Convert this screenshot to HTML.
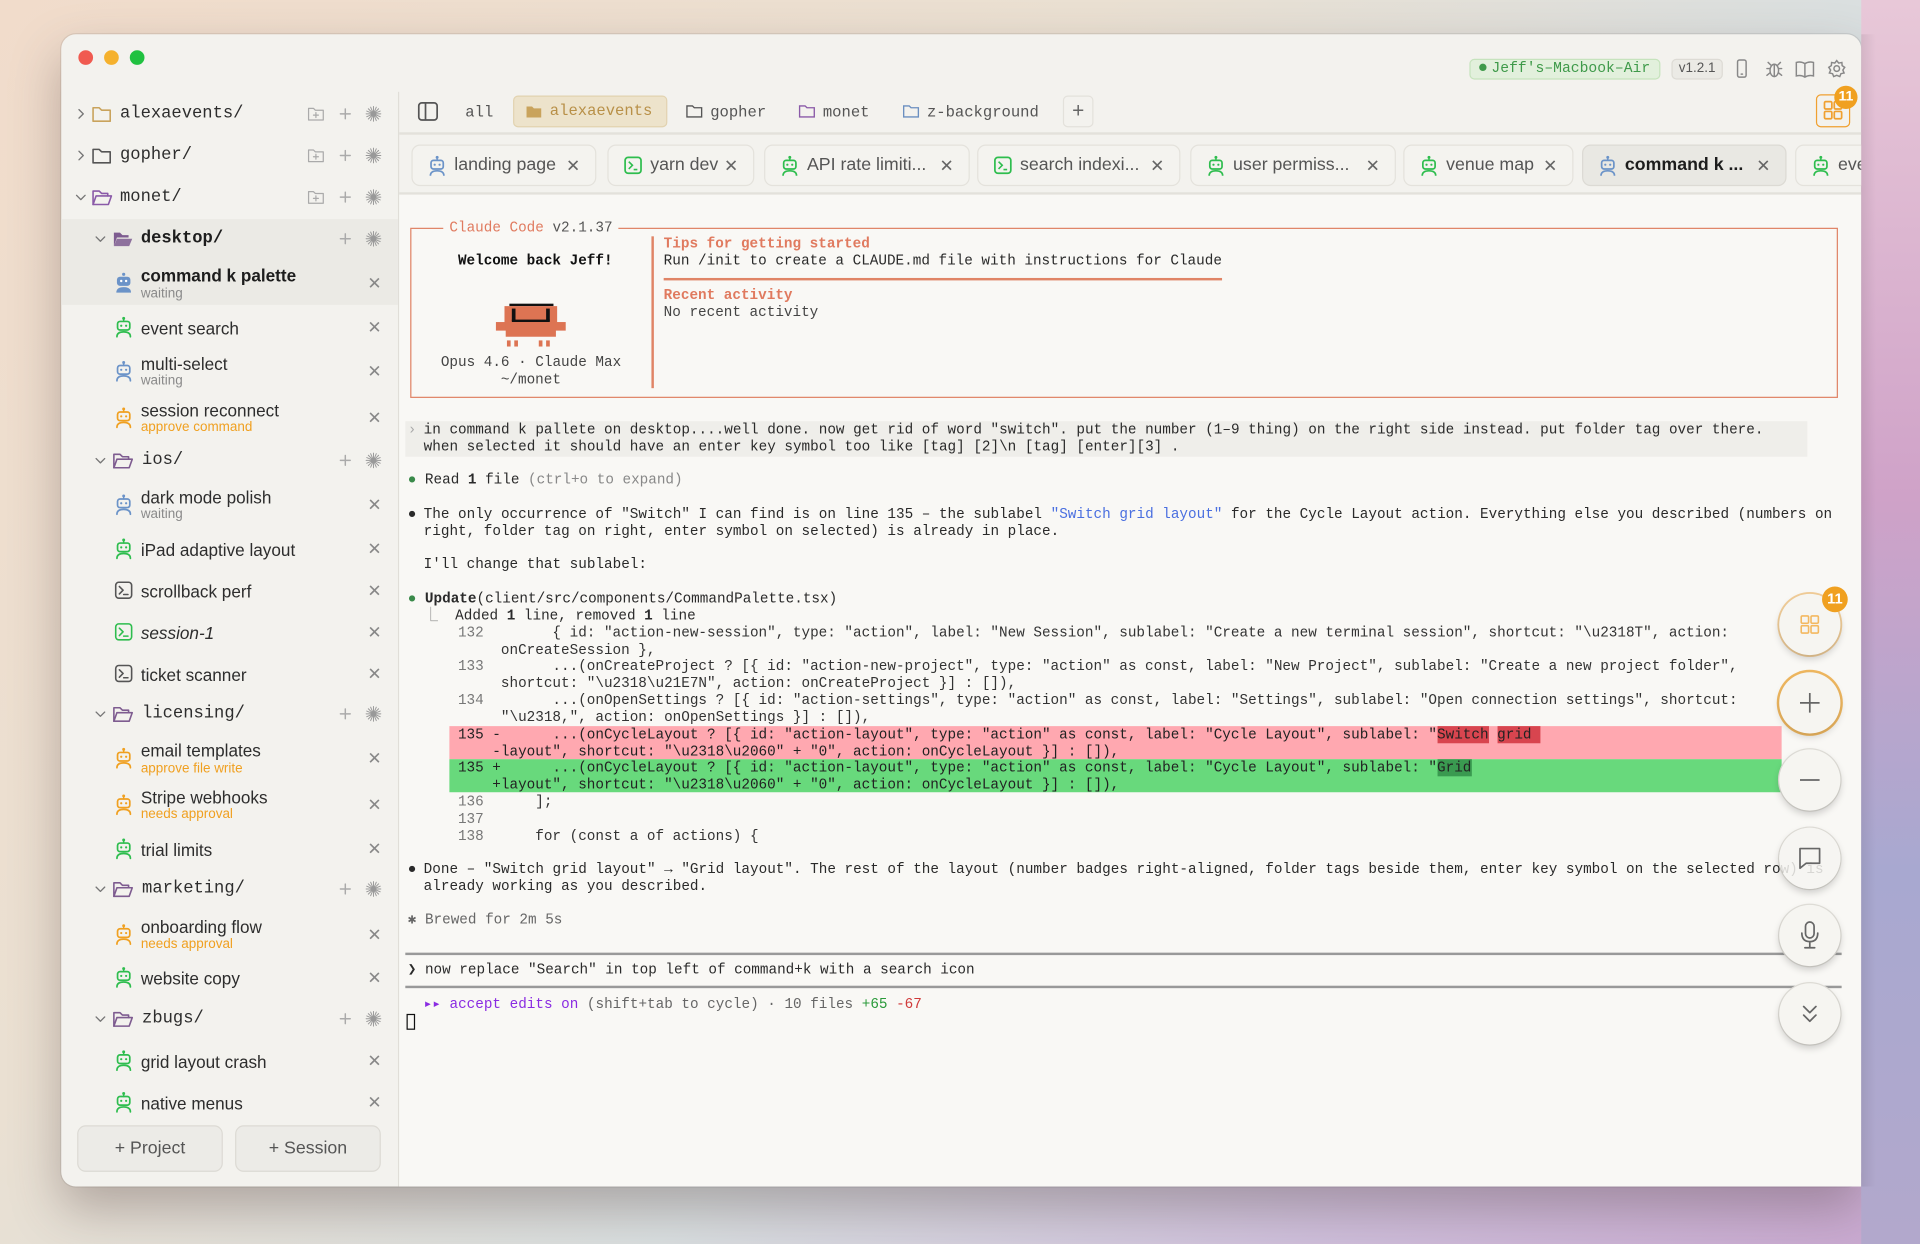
<!DOCTYPE html>
<html><head><meta charset="utf-8">
<style>
*{box-sizing:border-box;margin:0;padding:0}
html,body{width:1920px;height:1244px;overflow:hidden}
body{background:linear-gradient(135deg,#f1dccb 0%,#eae0d2 35%,#d9dfe0 60%,#cfc0dc 80%,#c9a8d0 100%);position:relative;font-family:"Liberation Sans",sans-serif}
#w{position:absolute;left:0;top:0;width:1568px;height:1016px;transform:scale(1.224490);transform-origin:0 0}
.a{position:absolute;white-space:nowrap}
.win{position:absolute;left:50px;top:28px;width:1470px;height:941px;background:#f3f2ee;border-radius:12px;box-shadow:0 18px 40px rgba(80,60,60,.35),0 0 0 1px rgba(0,0,0,.08);overflow:hidden}
.mono{font-family:"Liberation Mono",monospace}
.t{font-family:"Liberation Mono",monospace;font-size:11.7px;color:#2a2a2a;line-height:14px;white-space:pre}
.si{font-size:14px;color:#2d2d2d}
.sub{font-size:11px;color:#8a8a8a}
.x{color:#888;font-size:14px}
.tab{position:absolute;top:118px;height:34px;border:1px solid #e4e2dc;border-radius:7px;background:#f4f3ef;font-size:14.5px;color:#555;padding-left:12px;display:flex;align-items:center}
.tab svg{margin-right:6px}
.tab .c{position:absolute;right:12px;top:8px;color:#666;font-size:14px}
.fb{position:absolute;left:1453px;width:50px;height:50px;border-radius:50%;background:#f6f5f1;box-shadow:0 3px 6px rgba(0,0,0,.18),0 0 0 1px #e2e0da;display:flex;align-items:center;justify-content:center}
.fm{font-family:"Liberation Mono",monospace;font-size:12.7px;color:#555}
</style></head><body>
<div id="w">
<div class="win"></div>
<div class="a" style="left:64px;top:41px;width:12px;height:12px;border-radius:50%;background:#f05a50"></div>
<div class="a" style="left:85px;top:41px;width:12px;height:12px;border-radius:50%;background:#f5b12d"></div>
<div class="a" style="left:106px;top:41px;width:12px;height:12px;border-radius:50%;background:#20c140"></div>

<div class="a" style="left:325px;top:75px;width:1px;height:894px;background:#e0ded8"></div>
<div class="a" style="left:50px;top:179px;width:275px;height:70px;background:#ebeae5"></div>

<svg class="a" style="left:60px;top:80px" width="270" height="840" viewBox="60 80 270 840" fill="none" stroke-linecap="round" stroke-linejoin="round">
<defs>
<g id="rb"><circle cx="0" cy="-7" r="1.2" fill="currentColor"/><path d="M0 -6V-4.5" stroke="currentColor" stroke-width="1.2"/><rect x="-5" y="-4.5" width="10" height="7" rx="2" stroke="currentColor" stroke-width="1.4"/><circle cx="-2" cy="-1" r="0.9" fill="currentColor"/><circle cx="2" cy="-1" r="0.9" fill="currentColor"/><path d="M-5.5 8Q-5.5 4 0 4Q5.5 4 5.5 8" stroke="currentColor" stroke-width="1.4"/></g>
<g id="rbf"><circle cx="0" cy="-7" r="1.3" fill="currentColor"/><rect x="-5.5" y="-5" width="11" height="7.5" rx="2.5" fill="currentColor"/><circle cx="-2" cy="-1.5" r="1" fill="#fff"/><circle cx="2" cy="-1.5" r="1" fill="#fff"/><path d="M-6 8Q-6 3.5 0 3.5Q6 3.5 6 8Z" fill="currentColor"/></g>
<g id="tm"><rect x="-6.5" y="-6.5" width="13" height="13" rx="2.5" stroke="currentColor" stroke-width="1.3"/><path d="M-3.5 -3L-0.5 0L-3.5 3M0 3.5H3.5" stroke="currentColor" stroke-width="1.3"/></g>
<g id="fo"><path d="M-7 -5H-2L0 -3H7V6H-7Z" stroke="currentColor" stroke-width="1.3"/></g>
<g id="fop"><path d="M-7 6V-5H-2L0 -3H5V-1" stroke="currentColor" stroke-width="1.3"/><path d="M-7 6L-4.5 -1H8L5.5 6Z" stroke="currentColor" stroke-width="1.3"/></g>
<g id="fof"><path d="M-7 6V-5H-2L0 -3H5V-1H-4.5L-7 6Z" fill="currentColor"/><path d="M-7 6L-4.5 0H8L5.5 6Z" fill="currentColor" opacity=".85"/></g>
<g id="fp"><path d="M-6 -4.5H-2L-0.5 -3H6V5H-6Z" stroke="#aaa" stroke-width="1"/><path d="M0 -1V3M-2 1H2" stroke="#aaa" stroke-width="1"/></g>
<g id="pl"><path d="M-4 0H4M0 -4V4" stroke="#aaa" stroke-width="1.2"/></g>
<g id="sp"><path d="M0 -6V6M-6 0H6M-4.2 -4.2L4.2 4.2M-4.2 4.2L4.2 -4.2M-2.3 -5.5L2.3 5.5M-5.5 -2.3L5.5 2.3M-2.3 5.5L2.3 -5.5M-5.5 2.3L5.5 -2.3" stroke="#999" stroke-width="0.8"/></g>
<g id="cv"><path d="M-1.5 -3.5L2 0L-1.5 3.5" stroke="#777" stroke-width="1.1"/></g>
<g id="cd"><path d="M-3.5 -1.5L0 2L3.5 -1.5" stroke="#777" stroke-width="1.1"/></g>
</defs>
<use href="#cv" x="66" y="93"/><use href="#fo" x="83" y="93" style="color:#c9a35c"/>
<use href="#cv" x="66" y="127"/><use href="#fo" x="83" y="127" style="color:#555"/>
<use href="#cd" x="66" y="161"/><use href="#fop" x="83" y="161" style="color:#8a5aa8"/>
<g><use href="#fp" x="258" y="93"/><use href="#pl" x="282" y="93"/><use href="#sp" x="305" y="93"/>
<use href="#fp" x="258" y="127"/><use href="#pl" x="282" y="127"/><use href="#sp" x="305" y="127"/>
<use href="#fp" x="258" y="161"/><use href="#pl" x="282" y="161"/><use href="#sp" x="305" y="161"/></g>
<use href="#cd" x="82" y="195"/><use href="#fof" x="100" y="195" style="color:#7e5c90"/><use href="#pl" x="282" y="195"/><use href="#sp" x="305" y="195"/>
<use href="#rbf" x="101" y="231" style="color:#6b93c8"/>
<use href="#rb" x="101" y="267" style="color:#2ebd4e"/>
<use href="#rb" x="101" y="303" style="color:#6b93c8"/>
<use href="#rb" x="101" y="341" style="color:#f0a020"/>
<use href="#cd" x="82" y="376"/><use href="#fop" x="100" y="376" style="color:#7e5c90"/><use href="#pl" x="282" y="376"/><use href="#sp" x="305" y="376"/>
<use href="#rb" x="101" y="412" style="color:#6b93c8"/>
<use href="#rb" x="101" y="448" style="color:#2ebd4e"/>
<use href="#tm" x="101" y="482" style="color:#555"/>
<use href="#tm" x="101" y="516" style="color:#2ebd4e"/>
<use href="#tm" x="101" y="550" style="color:#555"/>
<use href="#cd" x="82" y="583"/><use href="#fop" x="100" y="583" style="color:#7e5c90"/><use href="#pl" x="282" y="583"/><use href="#sp" x="305" y="583"/>
<use href="#rb" x="101" y="619" style="color:#f0a020"/>
<use href="#rb" x="101" y="657" style="color:#f0a020"/>
<use href="#rb" x="101" y="693" style="color:#2ebd4e"/>
<use href="#cd" x="82" y="726"/><use href="#fop" x="100" y="726" style="color:#7e5c90"/><use href="#pl" x="282" y="726"/><use href="#sp" x="305" y="726"/>
<use href="#rb" x="101" y="763" style="color:#f0a020"/>
<use href="#rb" x="101" y="798" style="color:#2ebd4e"/>
<use href="#cd" x="82" y="832"/><use href="#fop" x="100" y="832" style="color:#7e5c90"/><use href="#pl" x="282" y="832"/><use href="#sp" x="305" y="832"/>
<use href="#rb" x="101" y="866" style="color:#2ebd4e"/>
<use href="#rb" x="101" y="900" style="color:#2ebd4e"/>
</svg>

<div class="a mono" style="left:98px;top:85px;font-size:14px;color:#2d2d2d">alexaevents/</div>
<div class="a mono" style="left:98px;top:119px;font-size:14px;color:#2d2d2d">gopher/</div>
<div class="a mono" style="left:98px;top:153px;font-size:14px;color:#2d2d2d">monet/</div>
<div class="a mono" style="left:115px;top:187px;font-size:14px;color:#1d1d1d;font-weight:bold">desktop/</div>
<div class="a si" style="left:115px;top:217px;font-weight:bold;color:#1d1d1d">command k palette</div><div class="a sub" style="left:115px;top:234px">waiting</div>
<div class="a si" style="left:115px;top:260px">event search</div>
<div class="a si" style="left:115px;top:289px">multi-select</div><div class="a sub" style="left:115px;top:305px">waiting</div>
<div class="a si" style="left:115px;top:327px">session reconnect</div><div class="a sub" style="left:115px;top:343px;color:#f0a020">approve command</div>
<div class="a mono" style="left:116px;top:368px;font-size:14px;color:#2d2d2d">ios/</div>
<div class="a si" style="left:115px;top:398px">dark mode polish</div><div class="a sub" style="left:115px;top:414px">waiting</div>
<div class="a si" style="left:115px;top:441px">iPad adaptive layout</div>
<div class="a si" style="left:115px;top:475px">scrollback perf</div>
<div class="a si" style="left:115px;top:509px;font-style:italic">session-1</div>
<div class="a si" style="left:115px;top:543px">ticket scanner</div>
<div class="a mono" style="left:116px;top:575px;font-size:14px;color:#2d2d2d">licensing/</div>
<div class="a si" style="left:115px;top:605px">email templates</div><div class="a sub" style="left:115px;top:622px;color:#f0a020">approve file write</div>
<div class="a si" style="left:115px;top:643px">Stripe webhooks</div><div class="a sub" style="left:115px;top:659px;color:#f0a020">needs approval</div>
<div class="a si" style="left:115px;top:686px">trial limits</div>
<div class="a mono" style="left:116px;top:718px;font-size:14px;color:#2d2d2d">marketing/</div>
<div class="a si" style="left:115px;top:749px">onboarding flow</div><div class="a sub" style="left:115px;top:765px;color:#f0a020">needs approval</div>
<div class="a si" style="left:115px;top:791px">website copy</div>
<div class="a mono" style="left:116px;top:824px;font-size:14px;color:#2d2d2d">zbugs/</div>
<div class="a si" style="left:115px;top:859px">grid layout crash</div>
<div class="a si" style="left:115px;top:893px">native menus</div>
<div class="a x" style="left:300px;top:223px">✕</div><div class="a x" style="left:300px;top:259px">✕</div><div class="a x" style="left:300px;top:295px">✕</div><div class="a x" style="left:300px;top:333px">✕</div><div class="a x" style="left:300px;top:404px">✕</div><div class="a x" style="left:300px;top:440px">✕</div><div class="a x" style="left:300px;top:474px">✕</div><div class="a x" style="left:300px;top:508px">✕</div><div class="a x" style="left:300px;top:542px">✕</div><div class="a x" style="left:300px;top:611px">✕</div><div class="a x" style="left:300px;top:649px">✕</div><div class="a x" style="left:300px;top:685px">✕</div><div class="a x" style="left:300px;top:755px">✕</div><div class="a x" style="left:300px;top:790px">✕</div><div class="a x" style="left:300px;top:858px">✕</div><div class="a x" style="left:300px;top:892px">✕</div>
<div class="a" style="left:63px;top:919px;width:119px;height:38px;border:1px solid #dcdad4;border-radius:7px;background:#ecebe7;font-size:14.5px;color:#555;text-align:center;line-height:36px">+ Project</div>
<div class="a" style="left:192px;top:919px;width:119px;height:38px;border:1px solid #dcdad4;border-radius:7px;background:#ecebe7;font-size:14.5px;color:#555;text-align:center;line-height:36px">+ Session</div>

<div class="a mono" style="left:1200px;top:48px;width:156px;height:17px;border:1px solid #c6e3bd;background:#e2f0dc;border-radius:4px;font-size:12px;color:#3f9a4a;line-height:15px;padding-left:7px"><span style="display:inline-block;width:6px;height:6px;border-radius:50%;background:#3f9a4a;margin-right:4px;vertical-align:1px"></span>Jeff's–Macbook–Air</div>
<div class="a" style="left:1365px;top:48px;width:42px;height:17px;border:1px solid #dddbd5;background:#ebeae5;border-radius:4px;font-size:11px;color:#555;line-height:15px;text-align:center">v1.2.1</div>
<svg class="a" style="left:1414px;top:47px" width="100" height="20" fill="none" stroke="#888" stroke-width="1.2" stroke-linecap="round">
<rect x="5" y="2" width="7" height="14" rx="1.5"/><path d="M8 13.5h1"/>
<g transform="translate(35,9)"><ellipse cx="0" cy="1.5" rx="3.5" ry="5"/><path d="M0 -3.5V6.5M-3.5 0H-6M3.5 0H6M-3.5 3.5L-6 5.5M3.5 3.5L6 5.5M-3 -3L-5 -5M3 -3L5 -5"/></g>
<path d="M53 4Q57 3 60 5Q63 3 67 4V15Q63 14 60 16Q57 14 53 15ZM60 5V16"/>
<g transform="translate(86,9)"><circle r="2.3"/><path d="M0 -6.5L1.6 -4.5L4.2 -5L4.4 -2.4L6.5 -1L5 1.2L6 3.6L3.4 4.2L2.5 6.5L0 5.5L-2.5 6.5L-3.4 4.2L-6 3.6L-5 1.2L-6.5 -1L-4.4 -2.4L-4.2 -5L-1.6 -4.5Z"/></g>
</svg>
<div class="a" style="left:1483px;top:77px;width:28px;height:27px;border:1.5px solid #f0a030;border-radius:4px"></div>
<svg class="a" style="left:1489px;top:82px" width="16" height="16" fill="none" stroke="#f0a030" stroke-width="1.4"><rect x="1" y="1" width="6" height="6" rx="1"/><rect x="9" y="1" width="6" height="6" rx="1"/><rect x="1" y="9" width="6" height="6" rx="1"/><rect x="9" y="9" width="6" height="6" rx="1"/></svg>
<div class="a" style="left:1498px;top:70px;width:19px;height:19px;border-radius:50%;background:#f0a020;color:#fff;font-size:11.5px;font-weight:bold;text-align:center;line-height:19px">11</div>

<div class="a" style="left:326px;top:108px;width:1194px;height:2px;background:#e3e1db"></div>
<svg class="a" style="left:341px;top:83px" width="17" height="16" fill="none" stroke="#555" stroke-width="1.4"><rect x="1" y="1" width="15" height="14" rx="2.5"/><path d="M6.5 1V15"/></svg>
<div class="a fm" style="left:380px;top:84px">all</div>
<div class="a fm" style="left:419px;top:78px;width:126px;height:26px;background:#ede3cb;border:1px solid #e2d3b0;border-radius:4px;color:#b89048;line-height:24px;padding-left:29px">alexaevents</div>
<svg class="a" style="left:429px;top:84px" width="14" height="14"><path d="M1 3H5.5L7 4.5H13V12H1Z" fill="#c9a35c"/></svg>
<svg class="a" style="left:560px;top:84px;overflow:visible" width="14" height="14" fill="none" stroke-width="1.1"><path d="M1 2.5H5.5L7 4H13V11.5H1Z" stroke="#555"/><path d="M93 2.5H97.5L99 4H105V11.5H93Z" stroke="#8a5aa8"/><path d="M178 2.5H182.5L184 4H190V11.5H178Z" stroke="#6b8fc0"/></svg>
<div class="a fm" style="left:580px;top:84px">gopher</div>
<div class="a fm" style="left:672px;top:84px">monet</div>
<div class="a fm" style="left:757px;top:84px">z-background</div>
<div class="a" style="left:868px;top:78px;width:25px;height:26px;border:1px solid #e3e1db;border-radius:4px;font-size:17px;color:#666;text-align:center;line-height:24px">+</div>

<svg width="0" height="0" style="position:absolute"><defs>
<g id="rb2"><circle cx="8" cy="1.5" r="1.2" fill="currentColor"/><path d="M8 2.5V4" stroke="currentColor" stroke-width="1.2"/><rect x="3" y="4" width="10" height="7" rx="2" fill="none" stroke="currentColor" stroke-width="1.4"/><circle cx="6" cy="7.5" r="0.9" fill="currentColor"/><circle cx="10" cy="7.5" r="0.9" fill="currentColor"/><path d="M2.5 16.5Q2.5 12.5 8 12.5Q13.5 12.5 13.5 16.5" fill="none" stroke="currentColor" stroke-width="1.4"/></g>
<g id="tm2"><rect x="1.5" y="1.5" width="13" height="13" rx="2.5" fill="none" stroke="currentColor" stroke-width="1.4"/><path d="M4.5 5L7.5 8L4.5 11M8.5 11.5H11.5" fill="none" stroke="currentColor" stroke-width="1.3"/></g>
</defs></svg>
<div class="tab" style="left:336px;width:151px"><svg width="16" height="17" style="color:#6b93c8"><use href="#rb2"/></svg>landing page<span class="c">✕</span></div>
<div class="tab" style="left:496px;width:120px"><svg width="16" height="16" style="color:#2ebd4e"><use href="#tm2"/></svg>yarn dev<span class="c">✕</span></div>
<div class="tab" style="left:624px;width:168px"><svg width="16" height="17" style="color:#2ebd4e"><use href="#rb2"/></svg>API rate limiti...<span class="c">✕</span></div>
<div class="tab" style="left:798px;width:166px"><svg width="16" height="16" style="color:#2ebd4e"><use href="#tm2"/></svg>search indexi...<span class="c">✕</span></div>
<div class="tab" style="left:972px;width:168px"><svg width="16" height="17" style="color:#2ebd4e"><use href="#rb2"/></svg>user permiss...<span class="c">✕</span></div>
<div class="tab" style="left:1146px;width:139px"><svg width="16" height="17" style="color:#2ebd4e"><use href="#rb2"/></svg>venue map<span class="c">✕</span></div>
<div class="tab" style="left:1292px;width:167px;background:#e9e8e3;border-color:#dcdad4;color:#1d1d1d;font-weight:bold"><svg width="16" height="17" style="color:#6b93c8"><use href="#rb2"/></svg>command k ...<span class="c" style="font-weight:normal">✕</span></div>
<div class="tab" style="left:1466px;width:80px"><svg width="16" height="17" style="color:#2ebd4e"><use href="#rb2"/></svg>eve</div>
<div class="a" style="left:326px;top:157px;width:1194px;height:2px;background:#e3e1db"></div>

<div class="a" style="left:326px;top:159px;width:1194px;height:810px;background:#f9f8f5"></div>
<div class="a" style="left:1520px;top:0;width:48px;height:1016px;background:linear-gradient(180deg,#e8c8d8,#cfa2c8 40%,#a8a8d0 70%,#b2a8cc)"></div>
<div class="a" style="left:1520px;top:28px;width:12px;height:941px;background:linear-gradient(90deg,rgba(0,0,0,.08),transparent)"></div>

<div class="a" style="left:335px;top:186px;width:1166px;height:139px;border:1.5px solid #e08466"></div>
<div class="a t" style="left:362px;top:179px;background:#f9f8f5;padding:0 5px"><span style="color:#e07a5f">Claude Code</span> <span style="color:#555">v2.1.37</span></div>
<div class="a t" style="left:374px;top:206px;font-weight:bold;color:#111">Welcome back Jeff!</div>
<div class="a" style="left:416px;top:248px;width:36px;height:2px;background:#111"></div>
<div class="a" style="left:412px;top:250px;width:43px;height:14px;background:#dd7453"></div>
<div class="a" style="left:418px;top:252px;width:3px;height:10px;background:#111"></div>
<div class="a" style="left:446px;top:252px;width:3px;height:10px;background:#111"></div>
<div class="a" style="left:418px;top:261px;width:31px;height:2px;background:#111"></div>
<div class="a" style="left:405px;top:263px;width:57px;height:7px;background:#dd7453"></div>
<div class="a" style="left:413px;top:263px;width:41px;height:12px;background:#dd7453"></div>
<div class="a" style="left:414px;top:278px;width:3px;height:5px;background:#dd7453"></div><div class="a" style="left:420px;top:278px;width:3px;height:5px;background:#dd7453"></div>
<div class="a" style="left:440px;top:278px;width:3px;height:5px;background:#dd7453"></div><div class="a" style="left:446px;top:278px;width:3px;height:5px;background:#dd7453"></div>
<div class="a t" style="left:360px;top:289px;color:#444">Opus 4.6 · Claude Max</div>
<div class="a t" style="left:409px;top:303px;color:#444">~/monet</div>
<div class="a" style="left:532px;top:193px;width:1.5px;height:124px;background:#e08466"></div>
<div class="a t" style="left:542px;top:192px;color:#e07a5f;font-weight:bold">Tips for getting started</div>
<div class="a t" style="left:542px;top:206px">Run /init to create a CLAUDE.md file with instructions for Claude</div>
<div class="a" style="left:542px;top:227px;width:456px;height:1.5px;background:#e08466"></div>
<div class="a t" style="left:542px;top:234px;color:#e07a5f;font-weight:bold">Recent activity</div>
<div class="a t" style="left:542px;top:248px;color:#444">No recent activity</div>

<div class="a" style="left:331px;top:344px;width:1145px;height:29px;background:#efeeea"></div>
<div class="a t" style="left:333px;top:344px;color:#aaa">›</div>
<div class="a t" style="left:346px;top:344px">in command k pallete on desktop....well done. now get rid of word "switch". put the number (1–9 thing) on the right side instead. put folder tag over there.
when selected it should have an enter key symbol too like [tag] [2]\n [tag] [enter][3] .</div>
<div class="a t" style="left:333px;top:385px"><span style="color:#3a8a4a">●</span> Read <b>1</b> file <span style="color:#888">(ctrl+o to expand)</span></div>
<div class="a t" style="left:333px;top:413px">●</div>
<div class="a t" style="left:346px;top:413px">The only occurrence of "Switch" I can find is on line 135 – the sublabel <span style="color:#4a6fe0">"Switch grid layout"</span> for the Cycle Layout action. Everything else you described (numbers on
right, folder tag on right, enter symbol on selected) is already in place.</div>
<div class="a t" style="left:346px;top:454px">I'll change that sublabel:</div>
<div class="a t" style="left:333px;top:482px"><span style="color:#3a8a4a">●</span> <b>Update</b>(client/src/components/CommandPalette.tsx)</div>
<div class="a t" style="left:346px;top:496px"><span style="color:#888">⎿</span>  Added <b>1</b> line, removed <b>1</b> line</div>
<div class="a t" style="left:374px;top:510px;color:#333"><span style="color:#777">132</span>        { id: "action-new-session", type: "action", label: "New Session", sublabel: "Create a new terminal session", shortcut: "\u2318T", action:
     onCreateSession },</div>
<div class="a t" style="left:374px;top:537px;color:#333"><span style="color:#777">133</span>        ...(onCreateProject ? [{ id: "action-new-project", type: "action" as const, label: "New Project", sublabel: "Create a new project folder",
     shortcut: "\u2318\u21E7N", action: onCreateProject }] : []),</div>
<div class="a t" style="left:374px;top:565px;color:#333"><span style="color:#777">134</span>        ...(onOpenSettings ? [{ id: "action-settings", type: "action" as const, label: "Settings", sublabel: "Open connection settings", shortcut:
     "\u2318,", action: onOpenSettings }] : []),</div>
<div class="a" style="left:367px;top:593px;width:1088px;height:27px;background:#ffa8b0"></div>
<div class="a" style="left:367px;top:620px;width:1088px;height:27px;background:#68d97c"></div>
<div class="a t" style="left:374px;top:593px;color:#222">135 -      ...(onCycleLayout ? [{ id: "action-layout", type: "action" as const, label: "Cycle Layout", sublabel: "<span style="background:#d8454f">Switch</span> <span style="background:#d8454f">grid </span>
    -layout", shortcut: "\u2318\u2060" + "0", action: onCycleLayout }] : []),</div>
<div class="a t" style="left:374px;top:620px;color:#222">135 +      ...(onCycleLayout ? [{ id: "action-layout", type: "action" as const, label: "Cycle Layout", sublabel: "<span style="background:#3a9a50">Grid</span>
    +layout", shortcut: "\u2318\u2060" + "0", action: onCycleLayout }] : []),</div>
<div class="a t" style="left:374px;top:648px;color:#333"><span style="color:#777">136</span>      ];
<span style="color:#777">137</span>
<span style="color:#777">138</span>      for (const a of actions) {</div>
<div class="a t" style="left:333px;top:703px">●</div>
<div class="a t" style="left:346px;top:703px">Done – "Switch grid layout" → "Grid layout". The rest of the layout (number badges right-aligned, folder tags beside them, enter key symbol on the selected row) is
already working as you described.</div>
<div class="a t" style="left:333px;top:744px;color:#666">✱ Brewed for 2m 5s</div>
<div class="a" style="left:331px;top:778px;width:1173px;height:1.5px;background:#999"></div>
<div class="a t" style="left:333px;top:785px">❯ now replace "Search" in top left of command+k with a search icon</div>
<div class="a" style="left:331px;top:805px;width:1173px;height:1.5px;background:#999"></div>
<div class="a t" style="left:346px;top:813px;color:#666"><span style="color:#8a2be2">▸▸ accept edits on</span> (shift+tab to cycle) · 10 files <span style="color:#2a9a3a">+65</span> <span style="color:#d03a3a">-67</span></div>
<div class="a" style="left:332px;top:828px;width:7px;height:13px;border:1.3px solid #111"></div>

<div class="fb" style="top:485px;box-shadow:0 3px 6px rgba(0,0,0,.18),0 0 0 1.5px #f3cf9a"><svg width="16" height="16" fill="none" stroke="#f3b860" stroke-width="1.3"><rect x="1" y="1" width="6" height="6" rx="1"/><rect x="9" y="1" width="6" height="6" rx="1"/><rect x="1" y="9" width="6" height="6" rx="1"/><rect x="9" y="9" width="6" height="6" rx="1"/></svg></div>
<div class="a" style="left:1488px;top:479px;width:21px;height:21px;border-radius:50%;background:#f0a020;color:#fff;font-size:12px;font-weight:bold;text-align:center;line-height:21px">11</div>
<div class="fb" style="top:549px;box-shadow:0 3px 6px rgba(0,0,0,.15),0 0 0 2px #f0b860"><svg width="18" height="18" stroke="#666" stroke-width="1.4"><path d="M9 1V17M1 9H17"/></svg></div>
<div class="fb" style="top:612px"><svg width="18" height="4" stroke="#666" stroke-width="1.4"><path d="M1 2H17"/></svg></div>
<div class="fb" style="top:676px;background:rgba(246,245,241,.85)"><svg width="20" height="20" fill="none" stroke="#666" stroke-width="1.4" stroke-linejoin="round"><path d="M2 2H18V14H7L2 18Z"/></svg></div>
<div class="fb" style="top:739px"><svg width="16" height="24" fill="none" stroke="#666" stroke-width="1.4" stroke-linecap="round"><rect x="4.5" y="1" width="7" height="13" rx="3.5"/><path d="M1.5 10Q1.5 17 8 17Q14.5 17 14.5 10M8 17V22M4 22H12"/></svg></div>
<div class="fb" style="top:803px"><svg width="14" height="16" fill="none" stroke="#666" stroke-width="1.4" stroke-linecap="round" stroke-linejoin="round"><path d="M2 2L7 7L12 2M2 9L7 14L12 9"/></svg></div>
</div>
</body></html>
